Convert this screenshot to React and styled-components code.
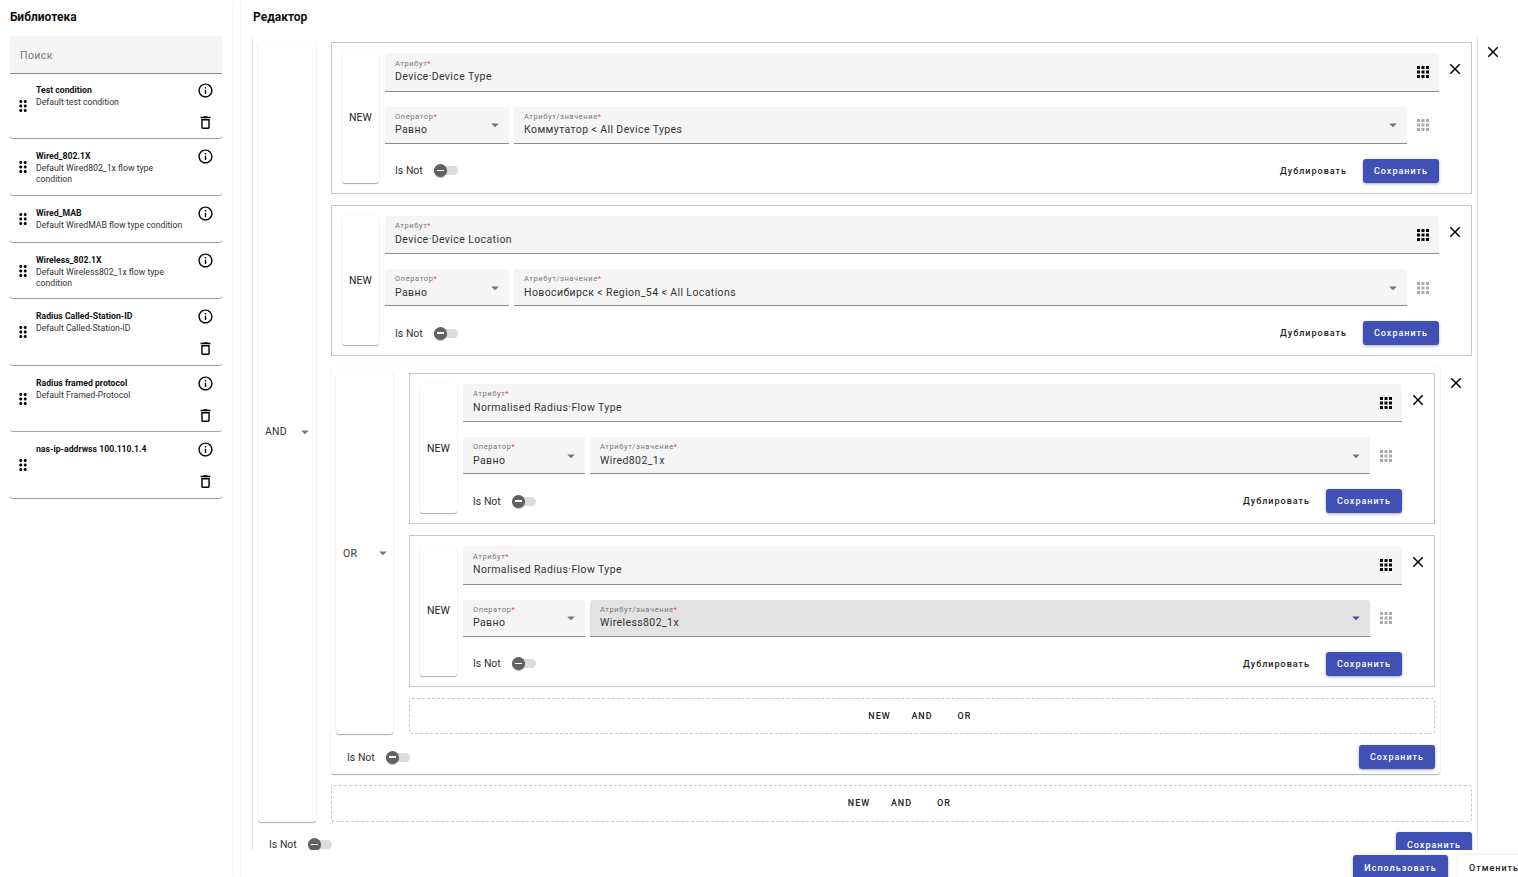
import React from 'react';
import styled, { createGlobalStyle } from 'styled-components';

const GlobalStyle = createGlobalStyle`
  html, body {
    margin: 0;
    padding: 0;
    background: #fff;
    font-family: Roboto, "Liberation Sans", sans-serif;
    color: rgba(0, 0, 0, 0.87);
  }
  * {
    box-sizing: border-box;
  }
`;

const ICONS = {
  close: 'M19 6.41 17.59 5 12 10.59 6.41 5 5 6.41 10.59 12 5 17.59 6.41 19 12 13.41 17.59 19 19 17.59 13.41 12z',
  apps: 'M4 8h4V4H4v4zm6 12h4v-4h-4v4zm-6 0h4v-4H4v4zm0-6h4v-4H4v4zm6 0h4v-4h-4v4zm6-10v4h4V4h-4zm-6 4h4V4h-4v4zm6 6h4v-4h-4v4zm0 6h4v-4h-4v4z',
  info: 'M11 7h2v2h-2zm0 4h2v6h-2zm1-9C6.48 2 2 6.48 2 12s4.48 10 10 10 10-4.48 10-10S17.52 2 12 2zm0 18c-4.41 0-8-3.59-8-8s3.59-8 8-8 8 3.59 8 8-3.59 8-8 8z',
  trash: 'M6 19c0 1.1.9 2 2 2h8c1.1 0 2-.9 2-2V7H6v12zM8 9h8v10H8V9zm7.5-5l-1-1h-5l-1 1H5v2h14V4z',
  drag: 'M11 18c0 1.1-.9 2-2 2s-2-.9-2-2 .9-2 2-2 2 .9 2 2zm-2-8c-1.1 0-2 .9-2 2s.9 2 2 2 2-.9 2-2-.9-2-2-2zm0-6c-1.1 0-2 .9-2 2s.9 2 2 2 2-.9 2-2-.9-2-2-2zm6 4c1.1 0 2-.9 2-2s-.9-2-2-2-2 .9-2 2 .9 2 2 2zm0 2c-1.1 0-2 .9-2 2s.9 2 2 2 2-.9 2-2-.9-2-2-2zm0 6c-1.1 0-2 .9-2 2s.9 2 2 2 2-.9 2-2-.9-2-2-2z',
  caret: 'M7 10l5 5 5-5z',
};

const Icon = ({ name, size = 18, color = '#000', className }) => (
  <svg className={className} width={size} height={size} viewBox="0 0 24 24" fill={color}>
    <path d={ICONS[name]} />
  </svg>
);

const paperShadow = '0 1px 1px rgba(0, 0, 0, 0.32), 0 0 2px rgba(0, 0, 0, 0.07)';

const Page = styled.div`
  display: flex;
  width: 1518px;
  height: 877px;
  overflow: hidden;
`;

const Sidebar = styled.aside`
  flex: none;
  width: 232px;
  height: 877px;
  padding: 0 10px;
  box-shadow: 0 0 2px rgba(0, 0, 0, 0.1);
`;

const Title = styled.h2`
  margin: 0;
  height: 36px;
  font-size: 12px;
  line-height: 34px;
  font-weight: 700;
  color: #111;
`;

const Search = styled.div`
  height: 37.5px;
  padding: 2px 10px 0;
  display: flex;
  align-items: center;
  background: #f5f5f5;
  border-bottom: 1px solid #8c8c8c;
  border-radius: 3px 3px 0 0;
  font-size: 10.5px;
  letter-spacing: 0.4px;
  color: #757575;
`;

const Card = styled.article`
  display: flex;
  min-height: 47px;
  border-radius: 3px;
  box-shadow: inset 0 -1px 0 rgba(0, 0, 0, 0.36);
  &:first-of-type {
    margin-top: -1px;
  }
`;

const DragCell = styled.div`
  flex: none;
  width: 26px;
  padding-left: 4px;
  display: flex;
  align-items: center;
`;

const CardText = styled.div`
  flex: none;
  width: 149px;
  padding: 11px 0 10.5px;
`;

const CardName = styled.div`
  font-size: 8.7px;
  line-height: 12px;
  font-weight: 700;
  color: #111;
`;

const CardNote = styled.div`
  margin-top: 1px;
  font-size: 8.7px;
  line-height: 11px;
  color: #333;
`;

const CardActions = styled.div`
  flex: none;
  margin-left: 12px;
  padding: 9px 0 8.5px;
  display: flex;
  flex-direction: column;
  gap: 15px;
  & svg {
    display: block;
  }
`;

const Editor = styled.main`
  flex: none;
  margin-left: 9px;
  width: 1277px;
  height: 877px;
  display: flex;
  flex-direction: column;
  box-shadow: 0 0 2px rgba(0, 0, 0, 0.1);
`;

const EditorBody = styled.div`
  flex: none;
  height: 850px;
  overflow: hidden;
`;

const EditorTitle = styled(Title)`
  padding-left: 12px;
  height: 37px;
`;

const EditorRow = styled.div`
  display: flex;
`;

const Frame = styled.div`
  flex: none;
  width: 1226px;
  margin-left: 11px;
  padding: 5px;
  border-left: 1px solid #e6e6e6;
  border-right: 1px solid #e6e6e6;
`;

const Group = styled.section`
  flex: 1;
  min-width: 0;
  padding: 5.5px 5px 5px;
  border-radius: 3px;
  box-shadow: ${paperShadow};
`;

const GroupBody = styled.div`
  display: flex;
  gap: ${p => (p.$nested ? '16px' : '15px')};
`;

const OperatorColumn = styled.div`
  flex: none;
  width: ${p => (p.$nested ? '57px' : '58px')};
  padding: 0 ${p => (p.$nested ? '1px' : '2px')} 0 7px;
  display: flex;
  align-items: center;
  justify-content: space-between;
  border-radius: 3px;
  box-shadow: ${paperShadow};
  font-size: 10.5px;
  letter-spacing: 0.2px;
  color: #333;
`;

const Stack = styled.div`
  flex: 1;
  min-width: 0;
  display: flex;
  flex-direction: column;
  gap: 11px;
`;

const RuleBox = styled.div`
  height: 151.5px;
  padding: 10px 0 10px 10px;
  display: flex;
  border: 1px solid #c8c8c8;
`;

const NewTag = styled.div`
  flex: none;
  width: 37px;
  margin-right: 6px;
  display: flex;
  align-items: center;
  justify-content: center;
  border-radius: 3px;
  box-shadow: ${paperShadow};
  font-size: 10.5px;
  color: #222;
`;

const RuleMain = styled.div`
  flex: 1;
  min-width: 0;
  display: flex;
  flex-direction: column;
  gap: 15px;
`;

const CloseSlot = styled.button`
  flex: none;
  display: flex;
  align-items: flex-start;
  width: 32px;
  height: 32px;
  margin: 7px 0 0;
  padding: 0 0 0 7px;
  border: 0;
  background: none;
`;

const PanelClose = styled(CloseSlot)`
  margin-top: 6px;
  padding-left: 6px;
`;

const FieldRow = styled.div`
  display: flex;
  gap: 5px;
`;

const Field = styled.div`
  position: relative;
  flex: ${p => (p.$width ? 'none' : '1')};
  width: ${p => (p.$width ? `${p.$width}px` : 'auto')};
  min-width: 0;
  height: 37.5px;
  padding: 5.5px 10px 0;
  background: ${p => (p.$active ? '#e3e3e3' : '#f5f5f5')};
  border-bottom: 1px solid #8c8c8c;
  border-radius: 3px 3px 0 0;
`;

const SelectField = styled(Field)`
  height: 37px;
  padding-top: 5px;
`;

const FieldLabel = styled.div`
  font-size: 7.5px;
  line-height: 10px;
  letter-spacing: 0.6px;
  color: #757575;
  & b {
    font-weight: 400;
    color: #f44336;
  }
`;

const FieldValue = styled.div`
  margin-top: 1.5px;
  font-size: 10.5px;
  line-height: 14px;
  letter-spacing: 0.4px;
  color: #333;
`;

const FieldIcon = styled.span`
  position: absolute;
  top: 10px;
  right: 7px;
  display: flex;
`;

const Caret = styled.span`
  position: absolute;
  top: 9.5px;
  right: 5px;
  display: flex;
`;

const GridSlot = styled.div`
  flex: none;
  width: 27px;
  padding-right: 5px;
  display: flex;
  align-items: center;
  justify-content: center;
  opacity: 0.33;
`;

const ActionRow = styled.div`
  flex: none;
  height: 24px;
  display: flex;
  align-items: center;
  padding-left: 10px;
`;

const GroupActions = styled(ActionRow)`
  margin-top: 11px;
  padding-left: 11px;
`;

const SwitchLabel = styled.span`
  font-size: 10.5px;
  color: #333;
  margin-right: 11px;
`;

const SwitchTrack = styled.span`
  position: relative;
  display: block;
  width: 24px;
  height: 9px;
  border-radius: 5px;
  background: #dcdcdc;
`;

const SwitchThumb = styled.span`
  position: absolute;
  left: 0;
  top: -2px;
  width: 13px;
  height: 13px;
  border-radius: 50%;
  background: #616161;
  box-shadow: 0 1px 1px rgba(0, 0, 0, 0.3);
  &::after {
    content: '';
    position: absolute;
    left: 3px;
    top: 5.5px;
    width: 7px;
    height: 1.5px;
    background: #fff;
  }
`;

const Spacer = styled.div`
  flex: 1;
`;

const TextButton = styled.button`
  flex: none;
  height: 24px;
  padding: 0 11px;
  border: 0;
  background: none;
  font-family: inherit;
  font-size: 9px;
  font-weight: 500;
  letter-spacing: 1px;
  color: #222;
`;

const ZoneButton = styled(TextButton)`
  width: 42.5px;
  padding: 0;
`;

const SolidButton = styled(TextButton)`
  width: 76px;
  padding: 0;
  margin-left: ${p => (p.$gap ? `${p.$gap}px` : '0')};
  border-radius: 3px;
  background: #3f51b5;
  color: #fff;
  box-shadow: 0 1px 3px rgba(0, 0, 0, 0.35);
`;

const TallButton = styled(SolidButton)`
  height: 26px;
  flex: none;
  align-self: flex-start;
`;

const FrameSave = styled(TallButton)`
  margin-top: -1px;
`;

const WideButton = styled(TallButton)`
  width: 95px;
`;

const DropZone = styled.div`
  height: 36.5px;
  display: flex;
  align-items: center;
  justify-content: center;
  border: 1px dashed #c8c8c8;
  border-radius: 3px;
`;

const FooterBar = styled.footer`
  flex: none;
  height: 27px;
  overflow: hidden;
  padding: 5px 11px 0 0;
  display: flex;
  justify-content: flex-end;
  align-items: flex-start;
  gap: 10px;
`;

const CancelButton = styled(TextButton)`
  height: 26px;
  margin-right: -23px;
  border-radius: 3px;
  box-shadow: 0 0 3px rgba(0, 0, 0, 0.15);
`;

const library = [
  { name: 'Test condition', note: 'Default test condition', removable: true },
  { name: 'Wired_802.1X', note: 'Default Wired802_1x flow type condition' },
  { name: 'Wired_MAB', note: 'Default WiredMAB flow type condition' },
  { name: 'Wireless_802.1X', note: 'Default Wireless802_1x flow type condition' },
  { name: 'Radius Called-Station-ID', note: 'Default Called-Station-ID', removable: true },
  { name: 'Radius framed protocol', note: 'Default Framed-Protocol', removable: true },
  { name: 'nas-ip-addrwss 100.110.1.4', note: '', removable: true },
];

const Toggle = () => (
  <>
    <SwitchLabel>Is Not</SwitchLabel>
    <SwitchTrack>
      <SwitchThumb />
    </SwitchTrack>
  </>
);

const Rule = ({ attribute, value, nested, active }) => (
  <RuleBox>
    <NewTag>NEW</NewTag>
    <RuleMain>
      <Field>
        <FieldLabel>Атрибут<b>*</b></FieldLabel>
        <FieldValue>{attribute}</FieldValue>
        <FieldIcon><Icon name="apps" /></FieldIcon>
      </Field>
      <FieldRow>
        <SelectField $width={nested ? 122 : 124}>
          <FieldLabel>Оператор<b>*</b></FieldLabel>
          <FieldValue>Равно</FieldValue>
          <Caret><Icon name="caret" color="#757575" /></Caret>
        </SelectField>
        <SelectField $active={active}>
          <FieldLabel>Атрибут/значение<b>*</b></FieldLabel>
          <FieldValue>{value}</FieldValue>
          <Caret><Icon name="caret" color={active ? '#3f51b5' : '#757575'} /></Caret>
        </SelectField>
        <GridSlot><Icon name="apps" /></GridSlot>
      </FieldRow>
      <ActionRow>
        <Toggle />
        <Spacer />
        <TextButton>Дублировать</TextButton>
        <SolidButton $gap={5}>Сохранить</SolidButton>
      </ActionRow>
    </RuleMain>
    <CloseSlot><Icon name="close" /></CloseSlot>
  </RuleBox>
);

const AddZone = () => (
  <DropZone>
    <ZoneButton>NEW</ZoneButton>
    <ZoneButton>AND</ZoneButton>
    <ZoneButton>OR</ZoneButton>
  </DropZone>
);

export default function App() {
  return (
    <Page>
      <GlobalStyle />
      <Sidebar>
        <Title>Библиотека</Title>
        <Search>Поиск</Search>
        {library.map(item => (
          <Card key={item.name}>
            <DragCell><Icon name="drag" /></DragCell>
            <CardText>
              <CardName>{item.name}</CardName>
              <CardNote>{item.note}</CardNote>
            </CardText>
            <CardActions>
              <Icon name="info" size={17} />
              {item.removable && <Icon name="trash" size={17} />}
            </CardActions>
          </Card>
        ))}
      </Sidebar>
      <Editor>
        <EditorBody>
          <EditorTitle>Редактор</EditorTitle>
          <EditorRow>
            <Frame>
              <GroupBody>
                <OperatorColumn>
                  AND
                  <Icon name="caret" color="#757575" />
                </OperatorColumn>
                <Stack>
                  <Rule attribute="Device·Device Type" value="Коммутатор < All Device Types" />
                  <Rule attribute="Device·Device Location" value="Новосибирск < Region_54 < All Locations" />
                  <EditorRow>
                    <Group>
                      <GroupBody $nested>
                        <OperatorColumn $nested>
                          OR
                          <Icon name="caret" color="#757575" />
                        </OperatorColumn>
                        <Stack>
                          <Rule nested attribute="Normalised Radius·Flow Type" value="Wired802_1x" />
                          <Rule nested active attribute="Normalised Radius·Flow Type" value="Wireless802_1x" />
                          <AddZone />
                        </Stack>
                      </GroupBody>
                      <GroupActions>
                        <Toggle />
                        <Spacer />
                        <SolidButton>Сохранить</SolidButton>
                      </GroupActions>
                    </Group>
                    <CloseSlot><Icon name="close" /></CloseSlot>
                  </EditorRow>
                  <AddZone />
                </Stack>
              </GroupBody>
              <GroupActions>
                <Toggle />
                <Spacer />
                <FrameSave>Сохранить</FrameSave>
              </GroupActions>
            </Frame>
            <PanelClose><Icon name="close" /></PanelClose>
          </EditorRow>
        </EditorBody>
        <FooterBar>
          <WideButton>Использовать</WideButton>
          <CancelButton>Отменить</CancelButton>
        </FooterBar>
      </Editor>
    </Page>
  );
}
